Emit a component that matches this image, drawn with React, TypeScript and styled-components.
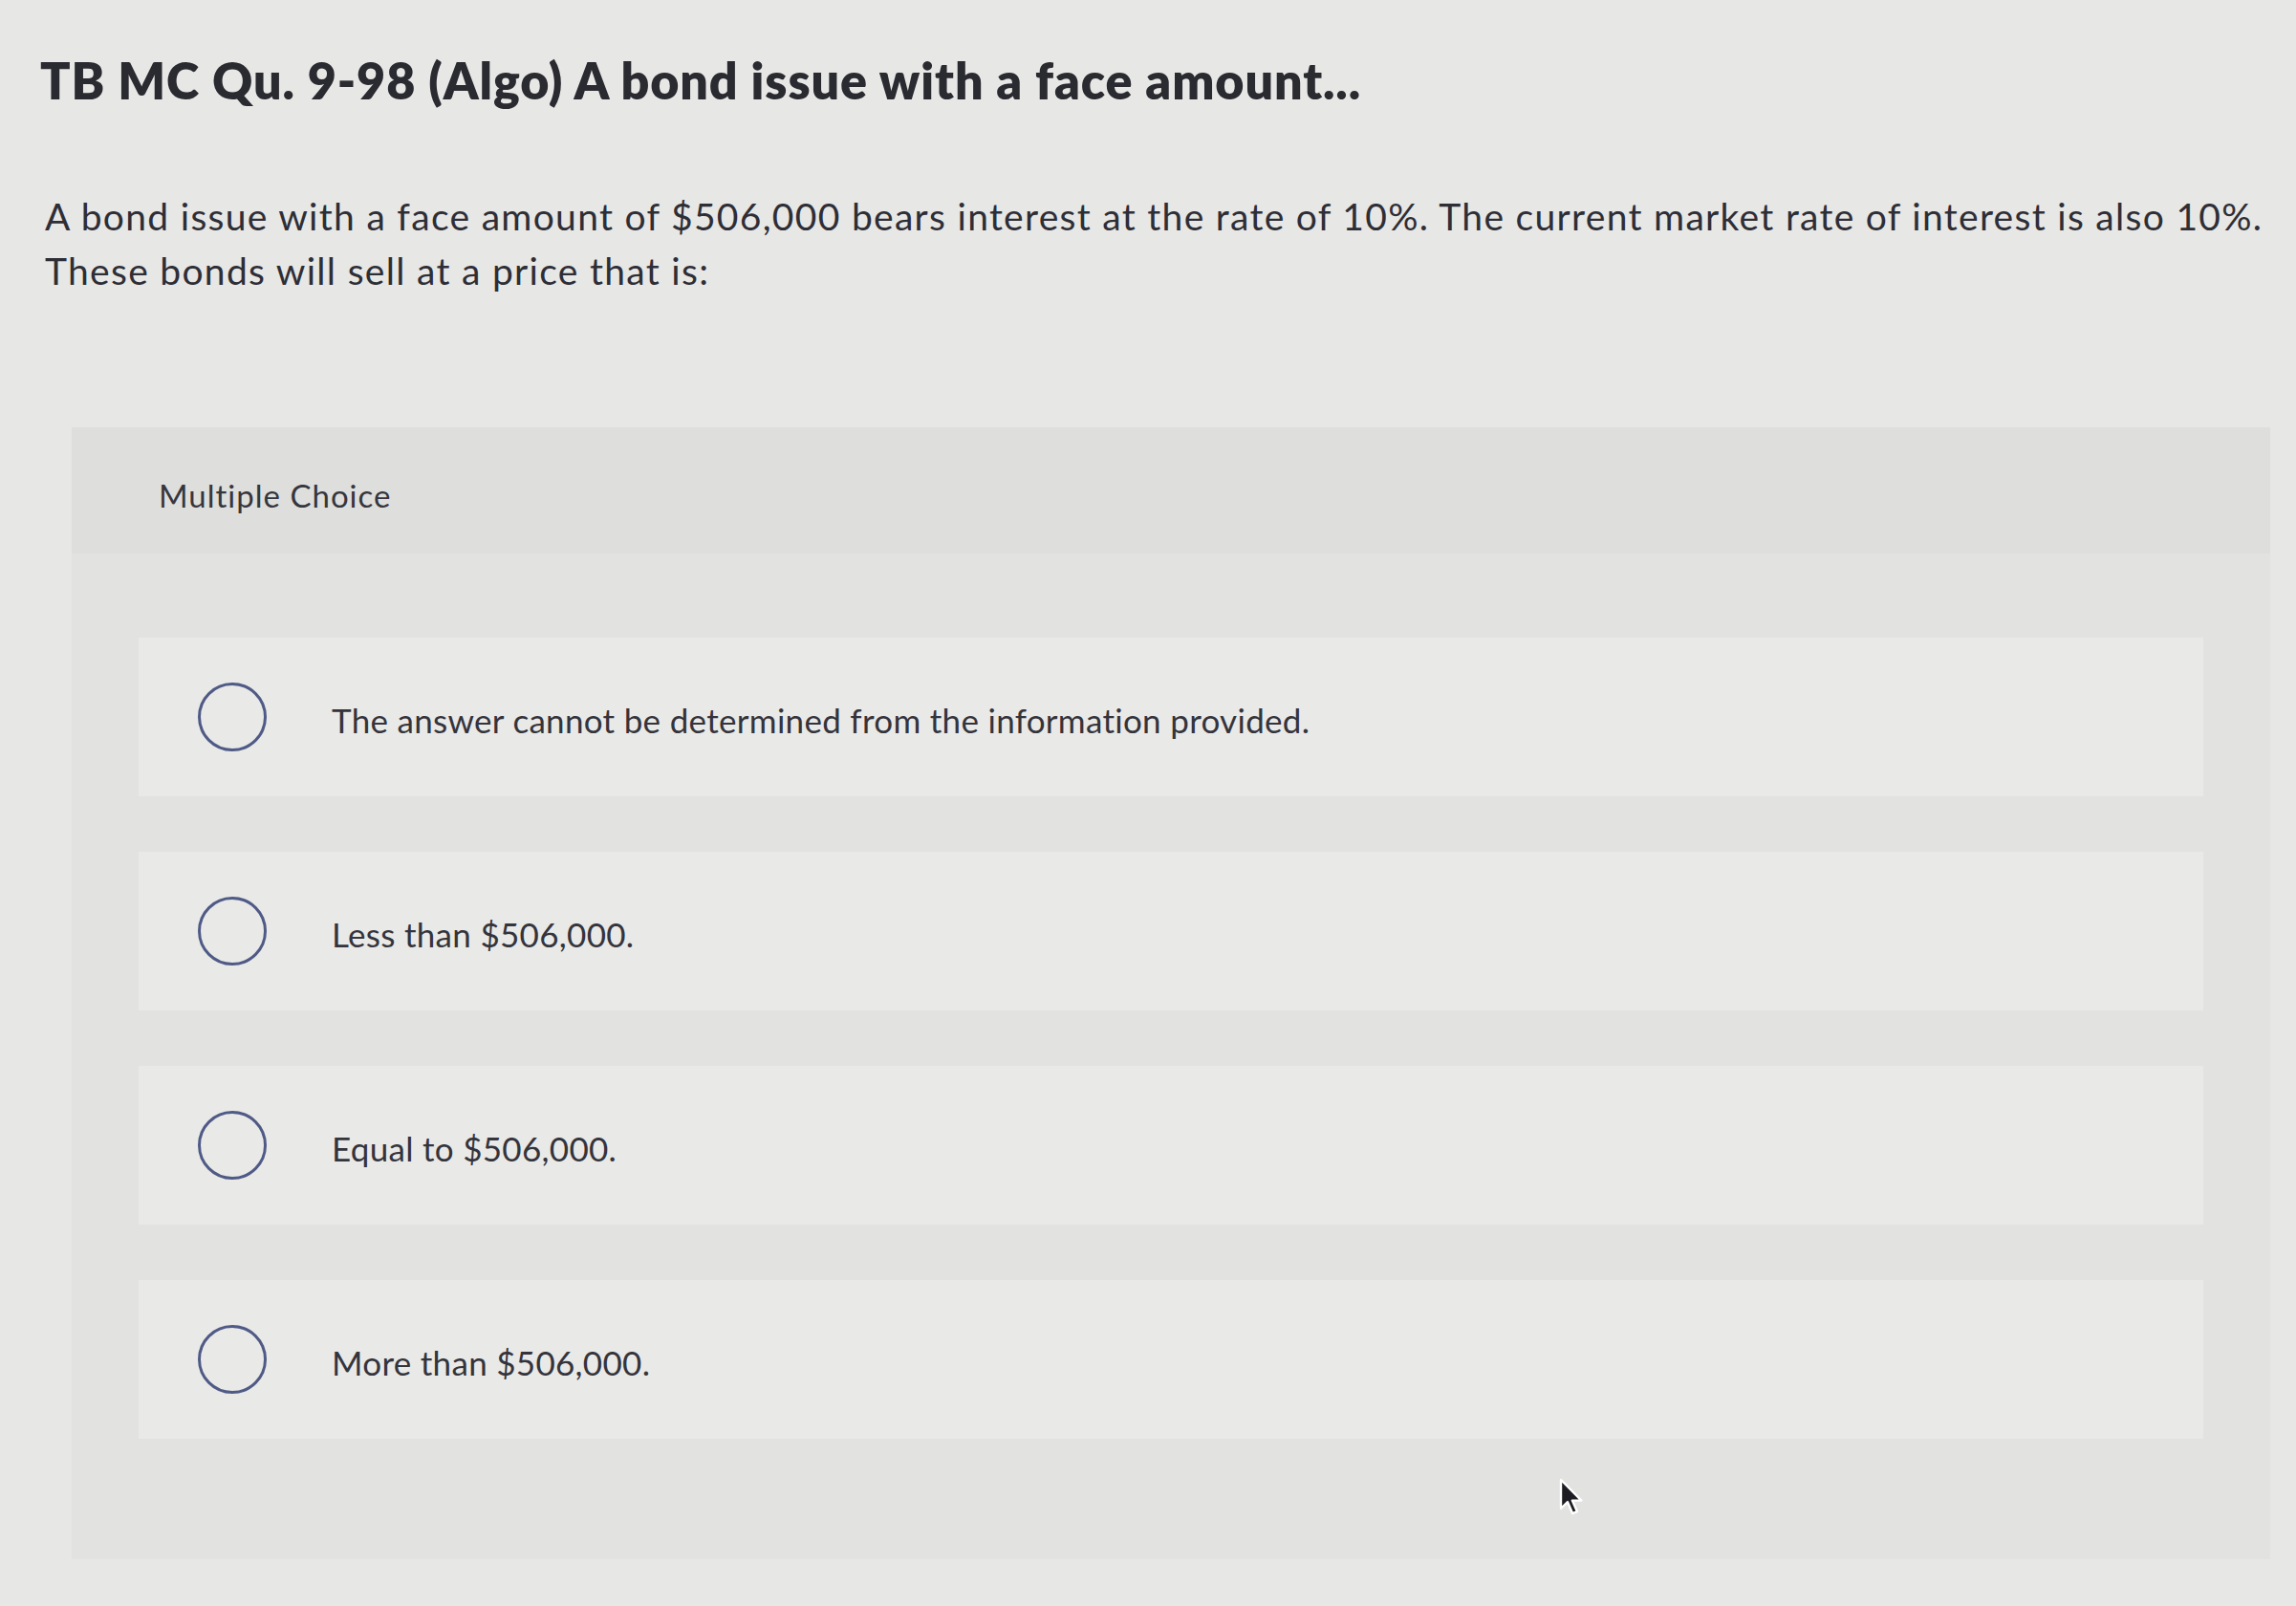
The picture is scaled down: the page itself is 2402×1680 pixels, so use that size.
import styled, { createGlobalStyle } from 'styled-components'

const GlobalStyle = createGlobalStyle`
    html, body {
        margin: 0;
        padding: 0;
        background: #e7e7e5;
    }
    body {
        font-family: Lato, "Noto Sans", "Liberation Sans", sans-serif;
        -webkit-font-smoothing: antialiased;
    }
`

const Page = styled.div`
    position: relative;
    width: 2402px;
    min-height: 1680px;
    overflow: hidden;
    padding-top: 53px;
    box-sizing: border-box;
`
const Title = styled.h1`
    margin: 0;
    padding-left: 42px;
    font-size: 52px;
    line-height: 62px;
    font-weight: 800;
    color: #2a2a31;
    letter-spacing: 0.9px;
`
const Prompt = styled.p`
    margin: 83px 0 0;
    padding-left: 47px;
    font-size: 39px;
    line-height: 57px;
    font-weight: 400;
    color: #2e2e36;
    letter-spacing: 1.3px;
    white-space: nowrap;
`
const ChoicePanel = styled.section`
    margin: 135px 0 0 75px;
    width: 2300px;
    background: #e2e2e0;
    padding-bottom: 126px;
`
const PanelHeader = styled.div`
    height: 132px;
    box-sizing: border-box;
    padding: 10px 0 0 91px;
    display: flex;
    align-items: center;
    background: #dededc;
    font-size: 33px;
    letter-spacing: 1px;
    color: #36363e;
`
const OptionList = styled.ul`
    list-style: none;
    margin: 88px 0 0;
    padding: 0 70px;
    display: flex;
    flex-direction: column;
    gap: 58px;
`
const OptionRow = styled.li`
    height: 166px;
    display: flex;
    align-items: center;
    gap: 68px;
    padding-left: 62px;
    background: #e9e9e7;
`
const Radio = styled.span`
    width: 72px;
    height: 72px;
    box-sizing: border-box;
    border: 3px solid #4f5a86;
    border-radius: 50%;
    flex-shrink: 0;
`
const OptionText = styled.span`
    font-size: 35px;
    letter-spacing: 0.3px;
    color: #34343c;
    padding-top: 6px;
`
const Pointer = styled.svg`
    position: absolute;
    left: 1630px;
    top: 1546px;
    width: 28px;
    height: 40px;
`

const options = [
    'The answer cannot be determined from the information provided.',
    'Less than $506,000.',
    'Equal to $506,000.',
    'More than $506,000.',
]

export default function App() {
    return (
        <Page>
            <GlobalStyle />
            <Title>TB MC Qu. 9-98 (Algo) A bond issue with a face amount...</Title>
            <Prompt>
                A bond issue with a face amount of $506,000 bears interest at the rate of 10%. The current market rate of interest is also 10%.
                <br />
                These bonds will sell at a price that is:
            </Prompt>
            <ChoicePanel>
                <PanelHeader>Multiple Choice</PanelHeader>
                <OptionList>
                    {options.map(text => (
                        <OptionRow key={text}>
                            <Radio />
                            <OptionText>{text}</OptionText>
                        </OptionRow>
                    ))}
                </OptionList>
            </ChoicePanel>
            <Pointer viewBox="0 0 14 20">
                <path d="M1.5 1 L1.5 16 L5 12.6 L7.6 18.6 L10 17.6 L7.4 11.8 L12.2 11.8 Z"
                    fill="#1c1c22" stroke="#ffffff" strokeWidth="1.2" strokeLinejoin="round" />
            </Pointer>
        </Page>
    )
}
